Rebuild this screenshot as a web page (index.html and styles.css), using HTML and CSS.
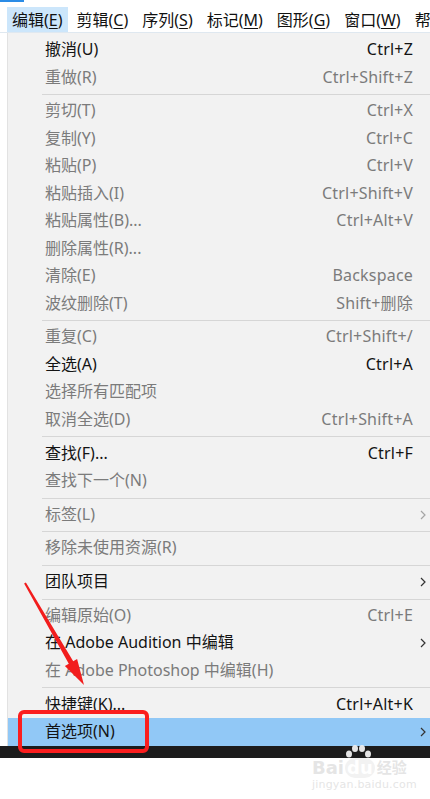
FILE: index.html
```html
<!DOCTYPE html>
<html lang="zh-CN">
  <head>
    <meta charset="UTF-8" />
    <meta name="viewport" content="width=device-width, initial-scale=1.0" />
    <title>编辑菜单</title>
    <link rel="stylesheet" href="styles.css">
  </head>
  <body>
    <div class="accent"></div>

    <nav class="menubar">
      <span class="mb-item active">编辑(<u>E</u>)</span>
      <span class="mb-item">剪辑(<u>C</u>)</span>
      <span class="mb-item">序列(<u>S</u>)</span>
      <span class="mb-item">标记(<u>M</u>)</span>
      <span class="mb-item">图形(<u>G</u>)</span>
      <span class="mb-item">窗口(<u>W</u>)</span>
      <span class="mb-item">帮</span>
    </nav>

    <div class="dropdown">
      <div class="row"><span>撤消(U)</span><span class="key">Ctrl+Z</span></div>
      <div class="row off"><span>重做(R)</span><span class="key">Ctrl+Shift+Z</span></div>
      <div class="sep"></div>
      <div class="row off"><span>剪切(T)</span><span class="key">Ctrl+X</span></div>
      <div class="row off"><span>复制(Y)</span><span class="key">Ctrl+C</span></div>
      <div class="row off"><span>粘贴(P)</span><span class="key">Ctrl+V</span></div>
      <div class="row off"><span>粘贴插入(I)</span><span class="key">Ctrl+Shift+V</span></div>
      <div class="row off"><span>粘贴属性(B)...</span><span class="key">Ctrl+Alt+V</span></div>
      <div class="row off"><span>删除属性(R)...</span></div>
      <div class="row off"><span>清除(E)</span><span class="key">Backspace</span></div>
      <div class="row off"><span>波纹删除(T)</span><span class="key">Shift+删除</span></div>
      <div class="sep"></div>
      <div class="row off"><span>重复(C)</span><span class="key">Ctrl+Shift+/</span></div>
      <div class="row"><span>全选(A)</span><span class="key">Ctrl+A</span></div>
      <div class="row off"><span>选择所有匹配项</span></div>
      <div class="row off"><span>取消全选(D)</span><span class="key">Ctrl+Shift+A</span></div>
      <div class="sep"></div>
      <div class="row"><span>查找(F)...</span><span class="key">Ctrl+F</span></div>
      <div class="row off"><span>查找下一个(N)</span></div>
      <div class="sep"></div>
      <div class="row off"><span>标签(L)</span><span class="sub"><svg viewBox="0 0 6 10"><polyline points="1,1 5,5 1,9" /></svg></span></div>
      <div class="sep"></div>
      <div class="row off"><span>移除未使用资源(R)</span></div>
      <div class="sep"></div>
      <div class="row"><span>团队项目</span><span class="sub"><svg viewBox="0 0 6 10"><polyline points="1,1 5,5 1,9" /></svg></span></div>
      <div class="sep"></div>
      <div class="row off"><span>编辑原始(O)</span><span class="key">Ctrl+E</span></div>
      <div class="row"><span>在 Adobe Audition 中编辑</span><span class="sub"><svg viewBox="0 0 6 10"><polyline points="1,1 5,5 1,9" /></svg></span></div>
      <div class="row off"><span>在 Adobe Photoshop 中编辑(H)</span></div>
      <div class="sep"></div>
      <div class="row"><span>快捷键(K)...</span><span class="key">Ctrl+Alt+K</span></div>
      <div class="row hover"><span>首选项(N)</span><span class="sub"><svg viewBox="0 0 6 10"><polyline points="1,1 5,5 1,9" /></svg></span></div>
    </div>

    <div class="strip"></div>

    <!-- annotations drawn over the screenshot -->
    <svg class="arrow" viewBox="0 0 430 799" width="430" height="799">
      <polygon points="24.1,583.5 25.9,582.5 73.2,661.3 77.1,659 84,685 64.9,666 68.8,663.8" />
    </svg>
    <div class="redbox"></div>

    <div class="watermark">
      <div class="wm-logo">
        <span class="wm-bai">Bai</span>
        <span class="wm-du">
          <svg class="wm-paw" viewBox="0 0 26 14">
            <ellipse cx="4" cy="9" rx="3" ry="3.5" />
            <ellipse cx="10" cy="3.5" rx="3" ry="3.5" />
            <ellipse cx="17" cy="3.5" rx="3" ry="3.5" />
            <ellipse cx="23" cy="9" rx="3" ry="3.5" />
          </svg>
          du
        </span>
        <span class="wm-jy">经验</span>
      </div>
      <div class="wm-url">jingyan.baidu.com</div>
    </div>
  </body>
</html>
```

FILE: styles.css
```css
body {
  margin: 0;
  width: 430px;
  height: 799px;
  overflow: hidden;
  position: relative;
  background: #ffffff;
  font-family: "Noto Sans", "Noto Sans CJK SC", sans-serif;
  font-size: 16px;
  color: #111;
}

.accent {
  width: 24px;
  height: 2px;
  background: #2b8ce6;
}

.menubar {
  display: flex;
  gap: 4px;
  padding: 5px 0 0 7px;
  white-space: nowrap;
  overflow: hidden;
  border-bottom: 1px solid #dfe8f0;
}

.mb-item {
  height: 25px;
  line-height: 26px;
  padding: 0 5px;
}

.mb-item.active {
  background: #cce6fb;
}

.mb-item u {
  text-underline-offset: 2px;
}

.dropdown {
  margin-left: 7px;
  padding-top: 3px;
  background: #f2f2f2;
  border-left: 1px solid #e2e2e2;
}

.row {
  display: grid;
  grid-template-columns: 1fr auto 17px;
  align-items: center;
  height: 27.5px;
  line-height: 27.5px;
  padding-left: 37px;
  white-space: nowrap;
  color: #141414;
}

.row.off {
  color: #7b7b7b;
}

.row.hover {
  background: #91c8f6;
}

.key {
  grid-column: 2;
  letter-spacing: 0.2px;
}

.sub {
  grid-column: 3;
  display: flex;
  justify-content: center;
  padding-left: 2px;
}

.sub svg {
  width: 6px;
  height: 10px;
  fill: none;
  stroke: #333;
  stroke-width: 1.2;
}

.row.off .sub svg {
  stroke: #a5a5a5;
}

.sep {
  height: 0;
  margin: 3px 0 2.2px 34px;
  border-top: 1px solid #d6d6d6;
}

.strip {
  height: 12.4px;
  background: #1c1c1c;
}

.arrow {
  position: absolute;
  left: 0;
  top: 0;
  pointer-events: none;
}

.arrow polygon {
  fill: #f21d1d;
}

.redbox {
  position: absolute;
  left: 18px;
  top: 710px;
  width: 123px;
  height: 35px;
  border: 4px solid #fb1e1e;
  border-radius: 6px;
}

.watermark {
  position: absolute;
  left: 312px;
  top: 747px;
  color: rgba(222, 222, 222, 0.8);
  font-family: "DejaVu Sans", "Noto Sans CJK SC", sans-serif;
}

.wm-logo {
  display: flex;
  align-items: flex-end;
  height: 31px;
  font-size: 18px;
  font-weight: bold;
  line-height: 20px;
}

.wm-du {
  position: relative;
  margin-left: 1px;
  padding: 0 2px;
  border-radius: 10px;
  background: rgba(232, 232, 232, 0.55);
  color: #ffffff;
}

.wm-paw {
  position: absolute;
  left: 0;
  top: -13px;
  width: 26px;
  height: 14px;
  fill: rgba(240, 240, 240, 0.95);
}

.wm-jy {
  margin-left: 2px;
  font-size: 15px;
}

.wm-url {
  font-size: 11px;
  line-height: 14px;
  letter-spacing: 0.2px;
}
```
